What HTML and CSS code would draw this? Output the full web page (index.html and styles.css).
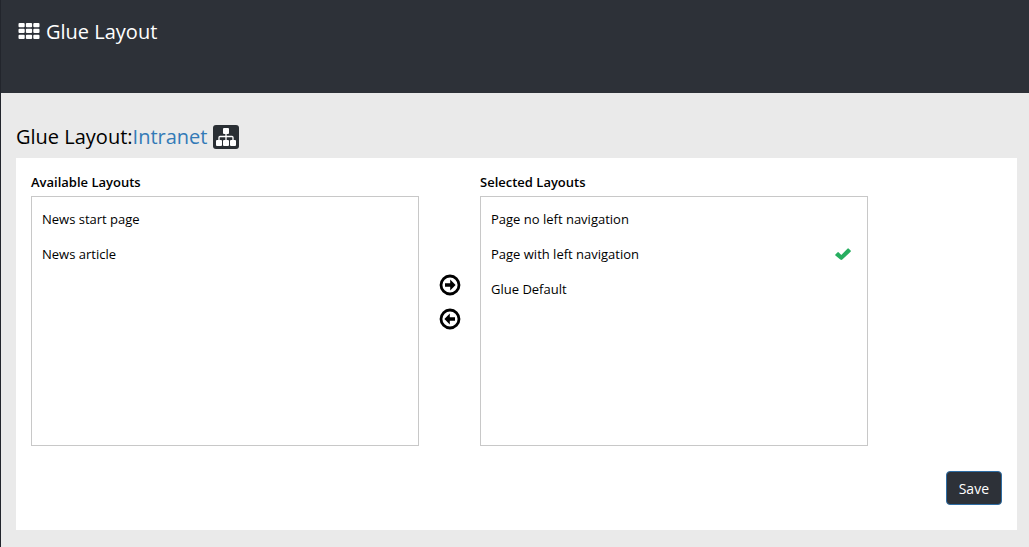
FILE: index.html
```html
<!DOCTYPE html>
<html lang="en">
<head>
<meta charset="utf-8">
<meta name="viewport" content="width=device-width, initial-scale=1">
<title>Glue Layout</title>
<link rel="stylesheet" href="styles.css">
</head>
<body>
<header class="topbar">
  <svg class="grid-icon" viewBox="0 0 21 16" aria-hidden="true">
    <g fill="#fff">
      <rect x="0" y="0" width="6.2" height="4.3" rx="1"/><rect x="7.4" y="0" width="6.2" height="4.3" rx="1"/><rect x="14.8" y="0" width="6.2" height="4.3" rx="1"/>
      <rect x="0" y="5.8" width="6.2" height="4.3" rx="1"/><rect x="7.4" y="5.8" width="6.2" height="4.3" rx="1"/><rect x="14.8" y="5.8" width="6.2" height="4.3" rx="1"/>
      <rect x="0" y="11.7" width="6.2" height="4.3" rx="1"/><rect x="7.4" y="11.7" width="6.2" height="4.3" rx="1"/><rect x="14.8" y="11.7" width="6.2" height="4.3" rx="1"/>
    </g>
  </svg>
  <h1 class="topbar-title">Glue Layout</h1>
</header>
<main class="content">
  <div class="heading">
    <h2 class="heading-title">Glue Layout:<a class="heading-link" href="#">Intranet</a></h2>
    <button class="tree-button" type="button" aria-label="Select page">
      <svg class="tree-icon" viewBox="0 0 20 18" aria-hidden="true">
        <g fill="#fff">
          <rect x="7" y="0" width="6" height="6" rx="1"/>
          <rect x="0" y="12" width="6" height="6" rx="1"/>
          <rect x="7" y="12" width="6" height="6" rx="1"/>
          <rect x="14" y="12" width="6" height="6" rx="1"/>
        </g>
        <path d="M10 6v6M3 12V9.5q0-1 1-1h12q1 0 1 1V12" fill="none" stroke="#fff" stroke-width="1.3"/>
      </svg>
    </button>
  </div>
  <form class="panel">
    <div class="picker">
      <section class="column">
        <h3 class="label" id="available">Available Layouts</h3>
        <ul class="list" aria-labelledby="available">
          <li class="item">News start page</li>
          <li class="item">News article</li>
        </ul>
      </section>
      <div class="movers">
        <button class="mover" type="button" aria-label="Add layout">
          <svg class="mover-icon" viewBox="0 0 22 22" aria-hidden="true">
            <circle cx="11" cy="11" r="9" fill="none" stroke="#000" stroke-width="2.8"/>
            <path d="M6 9.3h5.2V5.6l5.4 5.4-5.4 5.4v-3.7H6z"/>
          </svg>
        </button>
        <button class="mover" type="button" aria-label="Remove layout">
          <svg class="mover-icon" viewBox="0 0 22 22" aria-hidden="true">
            <circle cx="11" cy="11" r="9" fill="none" stroke="#000" stroke-width="2.8"/>
            <path d="M16 9.3h-5.2V5.6L5.4 11l5.4 5.4v-3.7H16z"/>
          </svg>
        </button>
      </div>
      <section class="column">
        <h3 class="label" id="selected">Selected Layouts</h3>
        <ul class="list" aria-labelledby="selected">
          <li class="item">Page no left navigation</li>
          <li class="item">Page with left navigation
            <svg class="check-icon" viewBox="0 0 16 12" role="img" aria-label="Default">
              <path d="M0.4 6.4 2.4 4.4q.7-.7 1.4 0L6.3 6.9 12.4.7q.7-.7 1.4 0l1.8 1.7q.7.7 0 1.4L7.3 11.6q-1 .8-2 0L.4 7.4q-.5-.5 0-1z" fill="#27ae60"/>
            </svg>
          </li>
          <li class="item">Glue Default</li>
        </ul>
      </section>
    </div>
    <div class="actions">
      <button class="save" type="submit">Save</button>
    </div>
  </form>
</main>
</body>
</html>
```
FILE: styles.css
```css
* {
  box-sizing: border-box;
}

body {
  margin: 0;
  min-height: 100vh;
  border-left: 1px solid #22252c;
  background: #eaeaea;
  color: #000;
  font-family: "Open Sans", "Noto Sans", sans-serif;
  font-size: 13px;
  line-height: 20px;
}

h1, h2, h3, ul {
  margin: 0;
  padding: 0;
}

button {
  font-family: inherit;
  cursor: pointer;
}

.topbar {
  display: flex;
  align-items: flex-start;
  gap: 6px;
  padding: 18px 17px 47px;
  background: #2d3138;
  color: #fff;
}

.grid-icon {
  width: 22px;
  height: 16px;
  margin-top: 5px;
}

.topbar-title,
.heading-title {
  font-size: 20px;
  font-weight: 400;
  line-height: 28px;
}

.content {
  padding: 30px 12px 17px 15px;
}

.heading {
  display: flex;
  align-items: center;
  gap: 6px;
  padding-bottom: 7px;
}

.heading-link {
  color: #337ab7;
  text-decoration: none;
}

.tree-button {
  display: flex;
  align-items: center;
  justify-content: center;
  width: 26px;
  height: 24px;
  padding: 0;
  border: 0;
  border-radius: 3px;
  background: #2a2f34;
}

.tree-icon {
  width: 20px;
  height: 18px;
}

.panel {
  padding: 15px 15px 25px;
  background: #fff;
}

.picker {
  display: grid;
  grid-template-columns: 388fr 61px 388fr 134fr;
}

.label {
  padding-bottom: 4px;
  font-size: 13px;
  font-weight: 600;
  line-height: 19px;
}

.list {
  min-height: 250px;
  padding: 4px 16px 4px 10px;
  border: 1px solid #c8c8c8;
  list-style: none;
}

.item {
  display: flex;
  align-items: center;
  justify-content: space-between;
  min-height: 35px;
}

.check-icon {
  width: 16px;
  height: 12px;
}

.movers {
  display: flex;
  flex-direction: column;
  align-items: center;
  justify-content: center;
  gap: 12px;
  padding-bottom: 15px;
}

.mover {
  display: flex;
  padding: 0;
  border: 0;
  background: none;
}

.mover-icon {
  width: 22px;
  height: 22px;
}

.actions {
  display: flex;
  justify-content: flex-end;
  padding-top: 25px;
}

.save {
  padding: 7px 12px 5px;
  border: 1px solid #2e6da4;
  border-radius: 4px;
  background: #2d3138;
  color: #fff;
  font-size: 14px;
  line-height: 20px;
}
```
